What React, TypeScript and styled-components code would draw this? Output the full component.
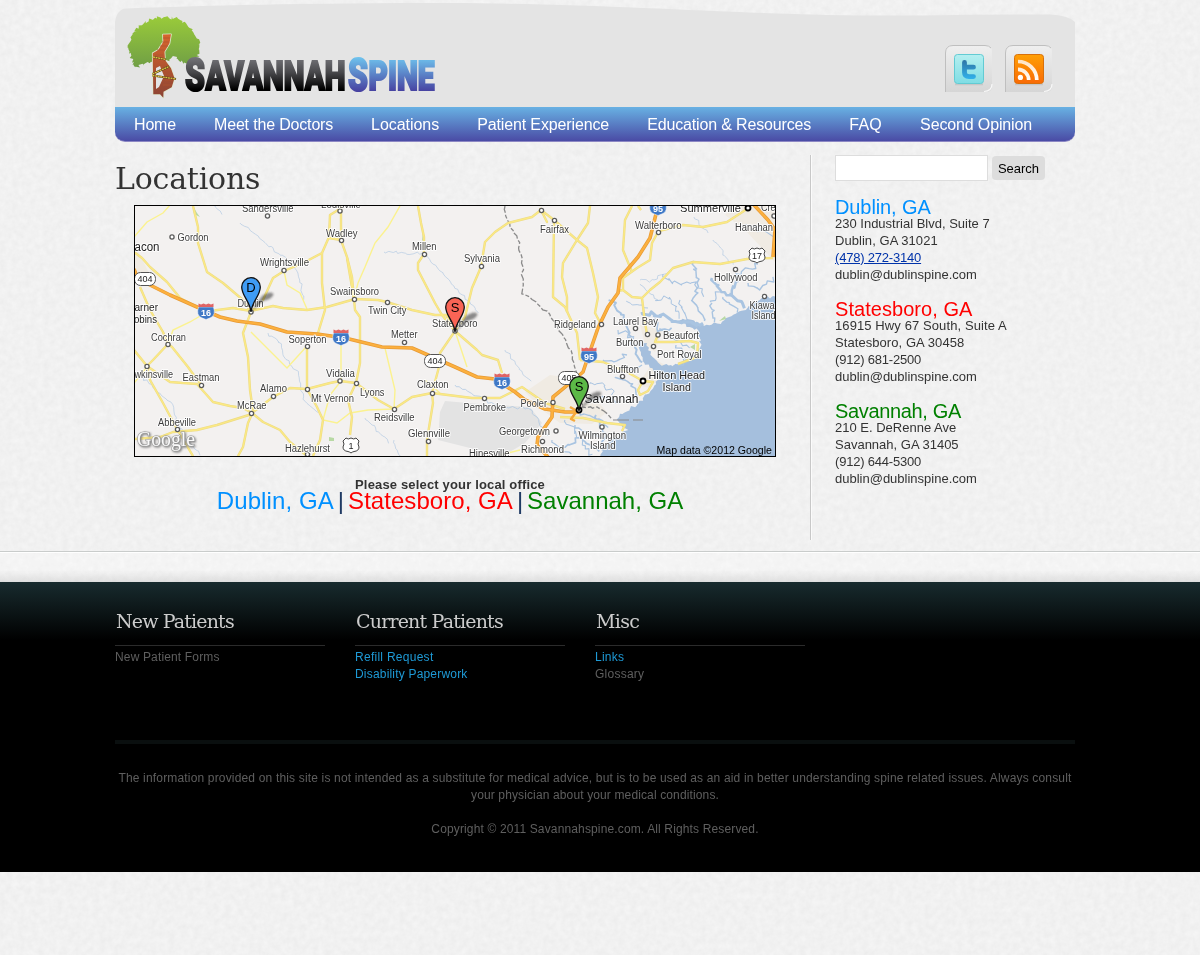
import React from "react";
import styled, { createGlobalStyle } from "styled-components";

const GlobalStyle = createGlobalStyle`
  body { margin: 0; background: #f1f1f1; font: 13px/17px "Liberation Sans", Arial, sans-serif; color: #333; }
  a { text-decoration: none; color: inherit; }
  h1, h2, h3, p { margin: 0; font-weight: normal; }
`;

const Paper = styled.svg`
  position: fixed;
  inset: 0;
  width: 100%;
  height: 100%;
  z-index: -1;
`;

const Page = styled.div`
  min-height: 955px;
`;
const Wrap = styled.div`
  width: 960px;
  margin-left: 115px;
`;
const Header = styled.header`
  height: 107px;
  svg { display: block; }
`;
const Nav = styled.nav`
  display: flex;
  height: 35px;
  box-sizing: border-box;
  border-bottom: 1px solid #8d88c4;
  border-radius: 0 0 10px 10px;
  background: linear-gradient(#68b1e3, #4a4ba5);
`;
const NavLink = styled.a<{ $track: number }>`
  padding: 0 19px;
  font-size: 16px;
  line-height: 35px;
  color: #fff;
  white-space: nowrap;
  letter-spacing: ${(p) => p.$track}px;
`;

const Columns = styled.div`
  display: flex;
  height: 409px;
`;
const Main = styled.main`
  width: 695px;
  padding-top: 13px;
`;
const Title = styled.h1`
  height: 50px;
  font: 30px/47px "DejaVu Serif", serif;
  letter-spacing: -0.2px;
  color: #333;
`;
const MapFrame = styled.div`
  width: 640px;
  height: 250px;
  margin-left: 19px;
  border: 1px solid #000;
  svg { display: block; }
`;
const Chooser = styled.div`
  width: 670px;
  margin-top: 19px;
  text-align: center;
`;
const Prompt = styled.p`
  font-weight: bold;
  letter-spacing: 0.16px;
`;
const Offices = styled.p`
  display: flex;
  justify-content: center;
  gap: 4px;
  margin-top: -1px;
  font-size: 24px;
  line-height: 17px;
  color: #1f3a63;
  white-space: nowrap;
`;
const OfficeLink = styled.a<{ $color: string; $track?: number }>`
  color: ${(p) => p.$color};
  letter-spacing: ${(p) => p.$track ?? 0}px;
`;

const Sidebar = styled.aside`
  margin-top: 13px;
  height: 385px;
  padding-left: 24px;
  border-left: 1px solid #c8c8c8;
  box-shadow: inset 1px 0 #fbfbfb;
`;
const SearchForm = styled.form`
  display: flex;
  align-items: center;
  gap: 4px;
  margin-bottom: 17px;
`;
const SearchInput = styled.input`
  box-sizing: border-box;
  width: 153px;
  height: 26px;
  border: 1px solid #ddd;
  background: #fff;
  padding: 0 4px;
`;
const SearchButton = styled.button`
  width: 53px;
  height: 24px;
  padding: 0;
  border: 0;
  border-radius: 4px;
  background: #ddd;
  color: #000;
  font: 13px "Liberation Sans", Arial, sans-serif;
`;
const Office = styled.section`
  margin-bottom: 17px;
`;
const OfficeName = styled.h3<{ $color: string; $track: number }>`
  height: 17px;
  font-size: 20px;
  line-height: 19px;
  color: ${(p) => p.$color};
  letter-spacing: ${(p) => p.$track}px;
`;
const Line = styled.div<{ $track?: number }>`
  letter-spacing: ${(p) => p.$track ?? 0}px;
`;
const Phone = styled.a`
  color: #0033aa;
  text-decoration: underline;
`;

const Band = styled.div`
  height: 30px;
  border-top: 1px solid #c9cccb;
  box-shadow: inset 0 1px #fff;
  background: linear-gradient(rgba(255, 255, 255, 0.25) 60%, rgba(190, 190, 190, 0.35));
`;
const Footer = styled.footer`
  height: 290px;
  background: linear-gradient(#182b2e, #000 58px);
`;
const FooterColumns = styled.div`
  display: flex;
  gap: 30px;
  height: 158px;
`;
const FooterColumn = styled.div`
  width: 210px;
  padding-top: 26px;
  font-size: 12px;
`;
const FooterTitle = styled.h2<{ $track: number }>`
  height: 37px;
  margin-bottom: 3px;
  border-bottom: 1px solid #2b2b2b;
  padding-left: 1px;
  font: 19px/26px "DejaVu Serif", serif;
  letter-spacing: ${(p) => p.$track}px;
  color: #ccc;
`;
const FooterLink = styled.a<{ $muted?: boolean; $track?: number }>`
  display: block;
  color: ${(p) => (p.$muted ? "#5f5f5f" : "#1e9ad6")};
  letter-spacing: ${(p) => p.$track ?? 0}px;
`;
const Legal = styled.div`
  border-top: 4px solid #0a0f0f;
  padding-top: 26px;
  text-align: center;
  font-size: 12px;
  color: #5f5f5f;
`;
const LegalLine = styled.p<{ $track: number }>`
  white-space: nowrap;
  letter-spacing: ${(p) => p.$track}px;
`;

type Pt = [number, number];

/* Breaks a polyline into short, deterministic jagged steps. */
function jagged(points: Pt[], step: number, amp: number, seed: number): string {
  let s = seed;
  const rnd = () => {
    s = (s * 16807) % 2147483647;
    return s / 2147483647 - 0.5;
  };
  let d = `M${points[0][0]} ${points[0][1]}`;
  for (let i = 1; i < points.length; i++) {
    const [ax, ay] = points[i - 1];
    const [bx, by] = points[i];
    const n = Math.max(1, Math.round(Math.hypot(bx - ax, by - ay) / step));
    for (let k = 1; k <= n; k++) {
      const t = k / n;
      d += `L${(ax + (bx - ax) * t + rnd() * amp).toFixed(1)} ${(ay + (by - ay) * t + rnd() * amp).toFixed(1)}`;
    }
  }
  return d;
}

const canopy: Pt[] = [
  [136, 68], [131, 57], [129, 45], [133, 34], [140, 25], [150, 19], [164, 17], [179, 19], [189, 25],
  [194, 34], [199, 41], [198, 56], [193, 64], [184, 62], [176, 57], [168, 60], [158, 60], [150, 62], [141, 65], [136, 68],
];

function HeaderArt() {
  return (
    <svg width="960" height="107" viewBox="115 0 960 107">
      <defs>
        <linearGradient id="leaf" x1="0" y1="0" x2="0" y2="1"><stop stopColor="#9acb3a" /><stop offset="1" stopColor="#6f9e45" /></linearGradient>
        <linearGradient id="bark" x1="0" y1="0" x2="0" y2="1"><stop stopColor="#d8652c" /><stop offset="1" stopColor="#8c4334" /></linearGradient>
        <linearGradient id="ink" gradientUnits="userSpaceOnUse" x1="0" y1="57" x2="0" y2="91"><stop stopColor="#75757a" /><stop offset=".45" stopColor="#48484b" /><stop offset=".95" stopColor="#000" /></linearGradient>
        <linearGradient id="sky" gradientUnits="userSpaceOnUse" x1="0" y1="57" x2="0" y2="92"><stop stopColor="#6fc4ee" /><stop offset="1" stopColor="#463f9f" /></linearGradient>
        <linearGradient id="tile" x1="0" y1="0" x2="0" y2="1"><stop stopColor="#efefef" /><stop offset="1" stopColor="#d6d6d6" /></linearGradient>
        <linearGradient id="tw" x1="0" y1="0" x2="0" y2="1"><stop stopColor="#b5eff0" /><stop offset="1" stopColor="#7fdde4" /></linearGradient>
        <linearGradient id="bird" gradientUnits="userSpaceOnUse" x1="0" y1="60" x2="0" y2="80"><stop stopColor="#2f74a5" /><stop offset="1" stopColor="#31b5ee" /></linearGradient>
        <linearGradient id="rss" x1="0" y1="0" x2="0" y2="1"><stop stopColor="#ffa004" /><stop offset="1" stopColor="#f96a06" /></linearGradient>
        <linearGradient id="wave" gradientUnits="userSpaceOnUse" x1="0" y1="58" x2="0" y2="82"><stop stopColor="#ffe0bd" /><stop offset="1" stopColor="#fff" /></linearGradient>
      </defs>
      <path d="M115 107V22Q117 9 126 8.5C260 4 340 3 450 3C640 4 760 17 920 15.5Q980 14 1050 14.5Q1068 15 1075 22V107Z" fill="#e4e4e4" />
      <path d={jagged(canopy, 1.6, 3.4, 77) + "Z"} fill="url(#leaf)" />
      <path d="M163 34.5L171 34.3L169.500 43.3L164.500 51.7L165 60L171 68.3L174.500 78.3L171.700 87.3L163.500 91.7L163.3 97.7L160 94.3H153.3L152.7 53.3L158.3 50L163.3 41.7Z" fill="url(#bark)" stroke="#dfe8cf" strokeWidth="1.6" strokeLinejoin="round" paintOrder="stroke" />
      <path d="M156 68L160 66L164 76L159 87L156 89Z" fill="#e4e4e4" />
      <path d="M163 38h7M162 42h7M160 46h8M157 50h7M155 55h8M160 65l8 3M163 70l8 1M165 75h8M165 80h8M163 85h9" stroke="#b0552f" strokeWidth=".7" fill="none" />
      <path d="M153 57L166 59.5M152.5 74L169 66.5M152.5 75.5L176 79" stroke="#54421a" strokeWidth="2.2" fill="none" />
      <path d="M153 57L166 59.5M152.5 74L169 66.5M152.5 75.5L176 79" stroke="#e3c445" strokeWidth="1.3" strokeDasharray="2 .6" fill="none" />
      <g fontFamily="Roboto, sans-serif" fontWeight="900" strokeWidth="2.200" strokeLinejoin="miter">
        <g fill="url(#ink)" stroke="url(#ink)">
          <text x="185" y="90.500" fontSize="45.500" textLength="20" lengthAdjust="spacingAndGlyphs">S</text>
          <text x="205.500" y="90" fontSize="41" textLength="140" lengthAdjust="spacingAndGlyphs">AVANNAH</text>
        </g>
        <g fill="url(#sky)" stroke="url(#sky)">
          <text x="348" y="90.500" fontSize="45.500" textLength="20" lengthAdjust="spacingAndGlyphs">S</text>
          <text x="368.500" y="90" fontSize="41" textLength="66" lengthAdjust="spacingAndGlyphs">PINE</text>
        </g>
      </g>
      {[945, 1005].map((x) => (
        <g key={x}>
          <path d={`M${x} 92V53Q${x} 45 ${x + 8} 45H${x + 40}Q${x + 47} 45 ${x + 47} 52V86Q${x + 47} 92 ${x + 41} 92Z`} fill="url(#tile)" />
          <path d={`M${x + 0.5} 92V53Q${x + 0.5} 45.500 ${x + 8} 45.500H${x + 40}Q${x + 44} 45.500 ${x + 46} 48`} fill="none" stroke="#bfbfbf" />
          <path d={`M${x + 47} 84Q${x + 47} 91 ${x + 39} 91.500`} fill="none" stroke="#f8f8f8" strokeWidth="1.2" />
          <rect x={x + 10} y="83.500" width="28" height="1.800" fill="#bbb" opacity=".6" />
        </g>
      ))}
      <rect x="954.500" y="54.500" width="29" height="29" rx="3" fill="url(#tw)" stroke="#62cbd3" />
      <path d="M964.5 62.500V72.500Q964.500 76.600 969 76.600H973.500M964.500 67.200H973.500" fill="none" stroke="url(#bird)" strokeWidth="4.800" strokeLinecap="round" />
      <rect x="1014.500" y="54.500" width="29" height="29" rx="3" fill="url(#rss)" stroke="#d9700a" />
      <g fill="none" stroke="url(#wave)" strokeWidth="3.700">
        <path d="M1018 69.300A10.700 10.700 0 0 1 1028.700 80M1018 61.500A18.800 18.800 0 0 1 1036.800 80" />
      </g>
      <circle cx="1020.400" cy="77.400" r="2.600" fill="#fff" />
    </svg>
  );
}

const majorRoads = [
  "M193 206L198 227V243L207 272L223 283L243 300L251 312L243 333L248 357L250 390L253 411",
  "M134 252L142 258L150 267L167 282L180 298L197 307L210 311L233 308L251 311L273 306L283 308L307 310L327 307L355 299L378 300L387 302L412 310L435 315L446 315L455 331",
  "M251 312L263 300L273 278L284 271L303 263L322 253L329 237L330 215L338 210L341 206V240L329 238M341 240L347 257L352 277L354 299",
  "M322 253V283L325 310L318 333",
  "M140 287L150 310L163 332L168 344L153 360L147 366L134 350M168 344L172 347L188 367L201 385",
  "M147 366L170 382L197 384L213 402L230 406L243 408L252 413L273 397L290 388L307 389L330 383L340 381L356 383L378 400L394 409L412 397L432 393L472 398H500L512 392L522 387L545 403L565 409",
  "M147 366L150 380L163 403L177 429L193 456M134 439L160 437L173 432L197 430L217 425L252 414L248 423L243 447L238 456M252 413L263 422L280 430L290 442L307 456",
  "M307 346V389L317 407L323 420L320 440L313 456",
  "M418 206L421 223L424 237V254L418 263V270L435 303L442 315L455 331L465 317L472 288L481 267L485 242L495 232L508 223L532 217L541 210L554 220L577 240L587 248L593 273L598 297L595 313L601 324",
  "M554 220L553 297L565 307L577 333L580 360M347 258L354 299L355 310L360 317V363L356 383L348 400L352 417L350 435",
  "M455 331L440 353L439 367L432 393L433 403L427 440V456M455 331L477 350L482 355L498 360L502 373",
  "M590 206L588 223L577 240L563 263L562 277L567 297V312M632 206L625 220L623 250L632 272",
  "M658 232L652 243L650 260L637 268L623 278V290L632 297L642 298L650 290L660 282L673 268L693 262L720 264L747 259L773 258M623 290L618 291M642 298L645 323L647 334",
  "M658 232L663 230L683 225L703 227L727 222L747 209M658 335L655 342L673 342L690 341L698 343L697 357L678 364",
  "M580 360L603 362L627 372L643 381L653 382L648 391L640 395L638 390L643 381M560 417L583 418L607 423L625 425L622 431M540 208L547 222L541 210M638 206L641 210",
];
const minorRoads = [
  "M284 271L287 285L300 293L307 309", "M134 237L147 222L163 213L170 205", "M207 312L190 322L173 330L168 344",
  "M400 206L388 227L375 243L365 267L358 283L354 299", "M251 332L287 368L297 357L307 346", "M341 337V381L330 395L323 420L337 423L350 413L368 410L394 409",
  "M455 331L467 367", "M385 348L395 390L394 409", "M425 380L440 393M134 383L147 367M500 455L520 450",
];
const highways = [
  "M134 269L137 277L150 285L170 295L197 307L220 317L237 321L260 324L287 332L317 334L345 338L382 347L412 348L428 355L455 367L477 377L495 379L515 392L525 400L545 409L565 412L579 412",
  "M658 206L650 238L638 257L620 278L618 293L608 307L598 328L587 360L583 372L570 383L553 397L552 417L538 437L537 445L548 457",
  "M754 205L768 220L775 230L773 257",
];

const creeks: [Pt[], number][] = [
  [[[240, 223], [262, 240], [285, 258], [300, 276], [303, 300]], 0.6],
  [[[215, 206], [222, 214]], 0.6], [[[130, 368], [152, 385], [172, 405], [184, 436], [200, 454]], 0.6],
  [[[268, 333], [282, 345], [284, 357], [300, 375], [303, 400], [318, 412]], 0.6],
  [[[384, 252], [425, 254], [444, 275], [462, 295], [478, 312]], 0.6],
  [[[455, 385], [500, 408], [530, 408], [548, 435]], 0.7], [[[394, 440], [400, 456]], 0.6],
  [[[365, 418], [390, 442]], 0.6], [[[505, 350], [520, 370], [530, 382]], 0.6],
  [[[610, 300], [625, 320], [634, 345], [641, 362]], 2], [[[618, 330], [632, 338]], 1.2],
  [[[642, 312], [662, 315], [683, 323], [703, 325]], 3], [[[663, 274], [674, 283], [694, 284], [706, 295]], 1.1],
  [[[694, 261], [699, 284], [692, 300], [706, 322]], 1.5], [[[712, 278], [722, 292], [732, 294], [736, 277]], 2.5],
  [[[731, 293], [744, 307]], 3], [[[736, 278], [745, 268], [760, 265]], 1.3], [[[720, 292], [709, 303]], 1.2],
  [[[748, 283], [762, 288], [775, 278]], 1.4], [[[655, 300], [671, 297], [680, 318]], 1],
  [[[680, 300], [687, 318]], 1.1], [[[712, 303], [714, 323]], 1.4], [[[723, 297], [738, 312]], 1.3],
  [[[590, 384], [604, 384], [616, 396]], 1], [[[590, 402], [602, 397], [620, 403]], 1.4],
  [[[580, 412], [596, 417], [609, 427]], 1.3], [[[575, 425], [590, 433], [605, 443]], 1.4],
  [[[565, 448], [579, 438], [600, 452]], 1.7], [[[552, 440], [570, 455]], 1.2], [[[596, 415], [605, 433], [603, 450]], 1.8],
  [[[565, 420], [585, 445], [591, 456]], 1.1], [[[615, 378], [632, 385], [638, 399]], 1.5],
  [[[627, 355], [615, 363], [602, 358]], 1.3], [[[642, 365], [630, 371]], 1.2], [[[660, 328], [677, 338], [690, 348]], 1.1],
  [[[676, 345], [688, 358], [679, 366]], 1.3], [[[655, 318], [658, 330], [671, 330]], 1.6], [[[694, 217], [708, 232]], 0.6],
  [[[640, 280], [651, 281], [671, 270]], 0.6], [[[713, 240], [733, 265]], 0.6], [[[757, 228], [774, 237]], 1.1],
  [[[740, 225], [764, 228]], 0.7], [[[648, 308], [627, 302]], 0.9], [[[658, 300], [640, 285]], 0.7],
];

const coast: Pt[] = [
  [777, 297], [763, 298], [747, 308], [733, 315], [720, 323], [703, 325], [687, 318], [676, 321], [698, 331],
  [701, 347], [697, 353], [682, 363], [670, 366], [660, 364], [650, 353], [644, 340], [637, 342], [644, 362],
  [660, 378], [650, 390], [640, 402], [620, 415], [618, 420], [627, 430], [610, 440], [603, 447], [601, 458],
];

const towns: [number, number][] = [
  [267.5, 216], [172, 237], [284, 270.5], [341.5, 240.5], [340, 211], [251, 312], [168, 344.5], [147, 366.5], [201.5, 385.5],
  [251.5, 413.5], [273.5, 396.5], [307.5, 346.5], [307.5, 389.5], [340, 381], [177.5, 429.5], [307.5, 454.5], [424.5, 254.5],
  [481.5, 266.5], [354.5, 299.5], [387.5, 302.5], [455, 331], [541.5, 210.5], [554.5, 220.5], [404.5, 342.5], [356.5, 383.5],
  [394.5, 409.5], [432.5, 393.5], [484.5, 398.5], [428.5, 441.5], [553, 402.5], [556, 431], [542.5, 441.5], [658.5, 232.5],
  [774, 216], [735.5, 269.5], [764.5, 296.5], [635.5, 328.5], [601.5, 324.5], [647.5, 334.5], [658, 335], [653.5, 346.5],
  [622.5, 376.5], [602, 427],
];
const cities: [number, number][] = [[748, 208], [643, 381], [579, 410]];

/* name, left, baseline, drawn width, font size */
const labels: [string, number, number, number, number?][] = [
  ["Sandersville", 242, 211.5, 51.5], ["Gordon", 177.5, 241, 31], ["acon", 134.500, 251, 25, 12], ["Wrightsville", 260, 266, 49],
  ["Wadley", 326, 236.5, 31.5], ["Louisville", 321, 208, 40], ["arner", 134.500, 311, 23.5, 11], ["obins", 134, 322.5, 23, 11],
  ["Dublin", 237.5, 307, 26], ["Swainsboro", 330, 294.5, 49], ["Cochran", 151, 341, 35], ["wkinsville", 134.500, 378, 38.5],
  ["Eastman", 182.5, 380.5, 37], ["McRae", 237, 408.5, 29.5], ["Alamo", 260, 391.5, 27], ["Soperton", 288.5, 342.5, 38],
  ["Vidalia", 326, 376.5, 29], ["Mt Vernon", 311, 401.5, 43], ["Abbeville", 158, 425.5, 38], ["Hazlehurst", 285, 451.5, 45],
  ["Millen", 412, 249.5, 24.5], ["Sylvania", 464, 261.5, 36], ["Twin City", 368, 313.5, 38.5], ["Statesboro", 432, 326.5, 45.5],
  ["Metter", 391, 337.5, 26.5], ["Fairfax", 540, 232.5, 29], ["Claxton", 417, 388, 31.5], ["Lyons", 360, 395.5, 24.5],
  ["Reidsville", 374, 420.5, 40.5], ["Pembroke", 463.5, 410.5, 42.5], ["Glennville", 408, 436.5, 42], ["Hinesville", 469, 456.5, 40.5],
  ["Pooler", 520.5, 406.5, 26.5], ["Georgetown", 499, 434.5, 51], ["Richmond", 521, 452.5, 43], ["Walterboro", 635, 228.5, 46.5],
  ["Summerville", 680, 212, 61, 11], ["Cre", 761, 211, 14.5], ["Hanahan", 735, 230.5, 38], ["Hollywood", 714, 281, 43.5],
  ["Kiawa", 749.5, 308.5, 25], ["Island", 751.5, 318.5, 24], ["Laurel Bay", 613, 324.5, 45], ["Ridgeland", 554, 327.5, 42],
  ["Beaufort", 663, 338.5, 36], ["Burton", 616, 345.5, 27.5], ["Port Royal", 657, 357.5, 44.5], ["Bluffton", 607, 372.5, 32],
  ["Hilton Head", 648.5, 379, 56.5, 11], ["Island", 662.5, 391, 28.5, 11], ["Savannah", 584.5, 403, 54, 12],
  ["Wilmington", 578.5, 438.5, 47.5], ["Island", 590, 448.5, 25.5],
];

function Interstate({ x, y, n }: { x: number; y: number; n: string }) {
  return (
    <g transform={`translate(${x} ${y})`}>
      <path d="M-7.500 -4H7.500Q10 4 5 6.500L0 8.500L-5 6.500Q-10 4 -7.500 -4Z" fill="#3f78c6" stroke="#fff" strokeWidth=".5" />
      <path d="M-7.500 -4V-7.500L-5 -6.500L-2.500 -7.500L0 -6.500L2.500 -7.500L5 -6.500L7.500 -7.500V-4Z" fill="#e06464" />
      <text y="4.500" fontSize="9" fontWeight="bold" fill="#fff" textAnchor="middle">{n}</text>
    </g>
  );
}
function StateRoute({ x, y, n }: { x: number; y: number; n: string }) {
  return (
    <g>
      <rect x={x - 10.5} y={y - 6.5} width="21" height="13" rx="6" fill="#fff" stroke="#555" />
      <text x={x} y={y + 3.3} fontSize="9" fill="#222" textAnchor="middle">{n}</text>
    </g>
  );
}
function UsRoute({ x, y, n }: { x: number; y: number; n: string }) {
  return (
    <g transform={`translate(${x} ${y})`}>
      <path d="M-5 -7Q-3 -5 0 -7Q3 -5 5 -7L8 -4Q6 -1 8 2Q8 6 3 6.500Q1 7 0 8Q-1 7 -3 6.500Q-8 6 -8 2Q-6 -1 -8 -4Z" fill="#fff" stroke="#444" />
      <text y="3.500" fontSize="9" fill="#222" textAnchor="middle">{n}</text>
    </g>
  );
}
function Pin({ x, y, n, fill }: { x: number; y: number; n: string; fill: string }) {
  return (
    <g transform={`translate(${x} ${y})`}>
      <path d="M0 25L11 9Q20 3 22.500 7Q22 12 12 14Z" fill="#222" opacity=".5" filter="url(#soft)" />
      <path d="M0 25C-1 14 -9.300 9 -9.300 0A9.300 9.300 0 0 1 9.300 0C9.300 9 1 14 0 25Z" fill={fill} stroke="#111" strokeWidth="1.300" />
      <text y="4.800" fontSize="13" textAnchor="middle" fill="#000">{n}</text>
    </g>
  );
}

function OfficeMap() {
  return (
    <svg width="640" height="250" viewBox="135 206 640 250" fontFamily="Liberation Sans, Arial, sans-serif">
      <defs><filter id="soft" x="-30%" y="-30%" width="160%" height="160%"><feGaussianBlur stdDeviation="1" /></filter></defs>
      <rect x="135" y="206" width="640" height="250" fill="#f3f1f0" />
      <path d="M445 401L480 404L530 407L542 423L525 443L508 453L478 450L438 440L440 412Z" fill="#e3e3e3" />
      <path d="M525 392L550 375L570 378L592 395L607 412L592 424L560 423L545 412ZM735 206H775V262L745 230L725 215ZM135 245L150 275L135 285ZM640 325L662 330L655 352L645 344ZM655 360L670 367L650 388L637 385Z" fill="#f0ebe3" />
      <path d={jagged(coast, 2.5, 3, 31) + "L777 458Z"} fill="#a5bfdd" />
      {creeks.map(([pts, w], i) => (
        <path key={i} d={jagged(pts, 3, w < 0.95 ? 3 : 5, 101 + i * 37)} fill="none" stroke="#a9c4e1" strokeWidth={w} strokeLinejoin="round" />
      ))}
      <path d="M719 321L725 316L726 319ZM193 206l4 7l3 4l-6-3ZM423 232l2 6l-3 3ZM690 347l5-3v6ZM329 437l5 1v3h-5Z" fill="#b8d9a4" />
      <path d={jagged([[505, 206], [507, 220], [518, 240], [522, 263], [523, 293], [538, 305], [552, 317], [560, 330], [570, 350], [575, 367], [578, 390], [583, 408], [597, 407], [613, 419]], 4, 2.5, 19)} fill="none" stroke="#8a8a8a" strokeWidth="1.3" strokeDasharray="7 2 4 2" />
      <path d="M613 420H629M633 420H643" stroke="#8a8a8a" strokeWidth="1.200" />
      <g fill="none" stroke="#fbf28f" strokeWidth="1.400">{minorRoads.map((d) => <path key={d} d={d} />)}</g>
      <g fill="none" strokeLinejoin="round">
        {majorRoads.map((d) => <path key={d} d={d} stroke="#ecdb86" strokeWidth="2.400" />)}
        {majorRoads.map((d) => <path key={d} d={d} stroke="#fbe984" strokeWidth="1.300" />)}
        {highways.map((d) => <path key={d} d={d} stroke="#e79a35" strokeWidth="3.600" />)}
        {highways.map((d) => <path key={d} d={d} stroke="#fcb03e" strokeWidth="2.200" />)}
        <path d="M570 407L577 411L571 419L575 421" stroke="#f5a83c" strokeWidth="2.500" />
      </g>
      <g fill="#fff" stroke="#5a5a5a" strokeWidth="1.300">{towns.map(([x, y], i) => <circle key={i} cx={x} cy={y} r="2.100" />)}</g>
      <g fill="#fff" stroke="#000" strokeWidth="1.800">{cities.map(([x, y], i) => <circle key={i} cx={x} cy={y} r="2.500" />)}</g>
      <Interstate x={206} y={311} n="16" />
      <Interstate x={341} y={337} n="16" />
      <Interstate x={502} y={381} n="16" />
      <Interstate x={589} y={355} n="95" />
      <Interstate x={658} y={207} n="95" />
      <StateRoute x={145} y={279} n="404" />
      <StateRoute x={435} y={361} n="404" />
      <StateRoute x={569} y={378} n="405" />
      <UsRoute x={757} y={255} n="17" />
      <UsRoute x={351} y={445} n="1" />
      <g stroke="#fff" strokeWidth="2" strokeLinejoin="round" paintOrder="stroke" strokeOpacity=".85">
        {labels.map(([t, x, y, w, size = 10], i) => (
          <text key={i} x={x} y={y} fontSize={size} fill={size > 10 ? "#222" : "#3c3c3c"} textLength={w} lengthAdjust="spacingAndGlyphs">{t}</text>
        ))}
      </g>
      <Pin x={251} y={287} n="D" fill="#3f9cf5" />
      <Pin x={455} y={307} n="S" fill="#f96455" />
      <Pin x={579} y={386} n="S" fill="#5cb947" />
      <g fontFamily="Liberation Serif, serif" fontSize="22">
        <text x="137" y="446" fill="#fafafa" stroke="#999" strokeWidth="1.200" paintOrder="stroke" textLength="58" lengthAdjust="spacingAndGlyphs" style={{ filter: "drop-shadow(1px 1px 1px #777)" }}>Google</text>
      </g>
      <text x="656.500" y="453.500" fontSize="11" fill="#000" textLength="115.500" lengthAdjust="spacingAndGlyphs">Map data ©2012 Google</text>
    </svg>
  );
}

const navItems: [string, number][] = [
  ["Home", -0.17],
  ["Meet the Doctors", -0.17],
  ["Locations", -0.05],
  ["Patient Experience", -0.13],
  ["Education & Resources", -0.15],
  ["FAQ", 0.3],
  ["Second Opinion", -0.14],
];

export default function App() {
  return (
    <Page>
      <GlobalStyle />
      <Paper>
        <filter id="grain" x="0" y="0" width="100%" height="100%" colorInterpolationFilters="sRGB">
          <feTurbulence type="fractalNoise" baseFrequency=".16" numOctaves="3" seed="4" />
          <feColorMatrix values=".045 0 0 0 .922  .045 0 0 0 .922  .045 0 0 0 .922  0 0 0 0 1" />
        </filter>
        <rect width="100%" height="100%" filter="url(#grain)" />
      </Paper>
      <Wrap>
        <Header><HeaderArt /></Header>
        <Nav>{navItems.map(([n, track]) => <NavLink key={n} href="#" $track={track}>{n}</NavLink>)}</Nav>
        <Columns>
          <Main>
            <Title>Locations</Title>
            <MapFrame><OfficeMap /></MapFrame>
            <Chooser>
              <Prompt>Please select your local office</Prompt>
              <Offices>
                <OfficeLink href="#" $color="#0090ff" $track={0.1}>Dublin, GA</OfficeLink>
                <span>|</span>
                <OfficeLink href="#" $color="#ff0000" $track={0.05}>Statesboro, GA</OfficeLink>
                <span>|</span>
                <OfficeLink href="#" $color="#008000">Savannah, GA</OfficeLink>
              </Offices>
            </Chooser>
          </Main>
          <Sidebar>
            <SearchForm>
              <SearchInput aria-label="Search" />
              <SearchButton type="button">Search</SearchButton>
            </SearchForm>
            <Office>
              <OfficeName $color="#0090ff" $track={-0.1}>Dublin, GA</OfficeName>
              <Line>230 Industrial Blvd, Suite 7</Line>
              <Line $track={0.05}>Dublin, GA 31021</Line>
              <Line $track={-0.2}><Phone href="#">(478) 272-3140</Phone></Line>
              <Line>dublin@dublinspine.com</Line>
            </Office>
            <Office>
              <OfficeName $color="#ff0000" $track={0.05}>Statesboro, GA</OfficeName>
              <Line $track={0.1}>16915 Hwy 67 South, Suite A</Line>
              <Line $track={0.07}>Statesboro, GA 30458</Line>
              <Line $track={-0.2}>(912) 681-2500</Line>
              <Line>dublin@dublinspine.com</Line>
            </Office>
            <Office>
              <OfficeName $color="#008000" $track={-0.35}>Savannah, GA</OfficeName>
              <Line>210 E. DeRenne Ave</Line>
              <Line>Savannah, GA 31405</Line>
              <Line $track={-0.2}>(912) 644-5300</Line>
              <Line>dublin@dublinspine.com</Line>
            </Office>
          </Sidebar>
        </Columns>
      </Wrap>
      <Band />
      <Footer>
        <Wrap>
          <FooterColumns>
            <FooterColumn>
              <FooterTitle $track={-0.85}>New Patients</FooterTitle>
              <FooterLink href="#" $muted $track={0.15}>New Patient Forms</FooterLink>
            </FooterColumn>
            <FooterColumn>
              <FooterTitle $track={-0.82}>Current Patients</FooterTitle>
              <FooterLink href="#" $track={0.27}>Refill Request</FooterLink>
              <FooterLink href="#" $track={0.19}>Disability Paperwork</FooterLink>
            </FooterColumn>
            <FooterColumn>
              <FooterTitle $track={-0.65}>Misc</FooterTitle>
              <FooterLink href="#" $track={0.25}>Links</FooterLink>
              <FooterLink href="#" $muted $track={0.25}>Glossary</FooterLink>
            </FooterColumn>
          </FooterColumns>
          <Legal>
            <LegalLine $track={0.168}>The information provided on this site is not intended as a substitute for medical advice, but is to be used as an aid in better understanding spine related issues. Always consult</LegalLine>
            <LegalLine $track={0.13}>your physician about your medical conditions.</LegalLine>
            <br />
            <LegalLine $track={0.14}>Copyright © 2011 Savannahspine.com. All Rights Reserved.</LegalLine>
          </Legal>
        </Wrap>
      </Footer>
    </Page>
  );
}
